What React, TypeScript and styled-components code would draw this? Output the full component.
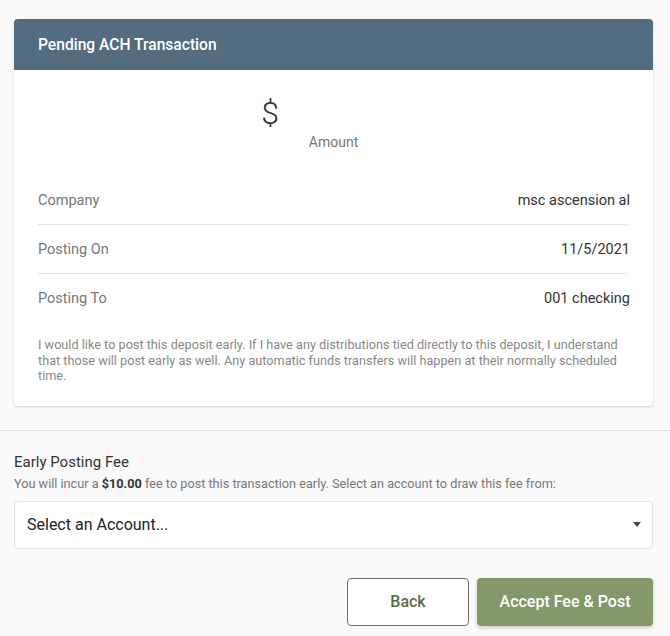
import React from "react";
import styled, { createGlobalStyle } from "styled-components";

const Global = createGlobalStyle`
  html, body { margin: 0; padding: 0; background: #fafafa; }
  body { font-family: Roboto, "Liberation Sans", Arial, sans-serif; color: #333; }
  * { box-sizing: border-box; }
`;

const Page = styled.div`
  width: 670px;
  min-height: 636px;
  background: #fafafa;
  padding-top: 19px;
`;

const CardWrap = styled.div`
  padding: 0 17px 24px 14px;
`;

const Card = styled.div`
  background: #fff;
  border-radius: 4px;
  overflow: hidden;
  box-shadow: 0 1px 3px rgba(0, 0, 0, 0.12), 0 1px 2px rgba(0, 0, 0, 0.06);
`;

const Header = styled.div`
  height: 51px;
  background: #536c80;
  display: flex;
  align-items: center;
  padding: 0 24px;
  color: #fff;
  font-size: 15.6px;
  font-weight: 500;
`;

const Body = styled.div`
  padding: 22px 24px 22px 24px;
`;

const AmountBlock = styled.div`
  display: flex;
  flex-direction: column;
  align-items: center;
  margin-bottom: 26px;
`;

const AmountRow = styled.div`
  display: flex;
  align-items: center;
  gap: 6px;
  height: 42px;
`;

const Dollar = styled.span`
  font-size: 32px;
  font-weight: 300;
  color: #333;
  line-height: 1;
`;

const AmountInput = styled.input`
  width: 121px;
  height: 38px;
  border: none;
  outline: none;
  background: transparent;
  font-family: inherit;
  font-size: 30px;
`;

const AmountLabel = styled.div`
  font-size: 14px;
  color: #777;
`;

const Row = styled.div<{ $last?: boolean }>`
  display: flex;
  justify-content: space-between;
  align-items: center;
  height: 49px;
  font-size: 14.5px;
  border-bottom: ${(p) => (p.$last ? "none" : "1px solid #e4e4e4")};
`;

const Label = styled.span`
  color: #777;
`;

const Value = styled.span`
  color: #333;
  margin-right: -1px;
`;

const Disclaimer = styled.p`
  margin: 14px 0 0 0;
  font-size: 12.7px;
  line-height: 15.5px;
  color: #888;
`;

const Divider = styled.hr`
  margin: 0;
  border: none;
  border-top: 1px solid #e2e2e2;
`;

const FeeSection = styled.div`
  padding: 22px 17px 0 14px;
`;

const FeeTitle = styled.div`
  font-size: 15px;
  color: #333;
`;

const FeeText = styled.div`
  font-size: 12.7px;
  color: #777;
  margin-top: 5px;
  strong {
    color: #333;
    font-weight: 700;
  }
`;

const Select = styled.div`
  margin-top: 10px;
  height: 48px;
  border: 1px solid #e3e3e3;
  border-radius: 4px;
  background: #fff;
  display: flex;
  align-items: center;
  justify-content: space-between;
  padding: 0 11px 0 12px;
  font-size: 16px;
  color: #222;
`;

const Caret = styled.span`
  width: 0;
  height: 0;
  border-left: 4px solid transparent;
  border-right: 4px solid transparent;
  border-top: 5px solid #444;
`;

const Actions = styled.div`
  display: flex;
  justify-content: flex-end;
  gap: 8px;
  margin-top: 29px;
`;

const Button = styled.button<{ $primary?: boolean }>`
  height: 48px;
  border-radius: 4px;
  font-family: inherit;
  font-size: 16px;
  font-weight: 500;
  cursor: pointer;
  width: ${(p) => (p.$primary ? "176px" : "122px")};
  background: ${(p) => (p.$primary ? "#83996a" : "#fff")};
  color: ${(p) => (p.$primary ? "#fff" : "#5b6b45")};
  border: ${(p) => (p.$primary ? "none" : "1px solid #6e6e60")};
  box-shadow: ${(p) =>
    p.$primary ? "0 2px 4px rgba(0,0,0,0.18)" : "none"};
`;

export default function App() {
  return (
    <Page>
      <Global />
      <CardWrap>
        <Card>
          <Header>Pending ACH Transaction</Header>
          <Body>
            <AmountBlock>
              <AmountRow>
                <Dollar>$</Dollar>
                <AmountInput readOnly value="" />
              </AmountRow>
              <AmountLabel>Amount</AmountLabel>
            </AmountBlock>
            <Row>
              <Label>Company</Label>
              <Value>msc ascension al</Value>
            </Row>
            <Row>
              <Label>Posting On</Label>
              <Value>11/5/2021</Value>
            </Row>
            <Row $last>
              <Label>Posting To</Label>
              <Value>001 checking</Value>
            </Row>
            <Disclaimer>
              I would like to post this deposit early. If I have any
              distributions tied directly to this deposit, I understand that
              those will post early as well. Any automatic funds transfers will
              happen at their normally scheduled time.
            </Disclaimer>
          </Body>
        </Card>
      </CardWrap>
      <Divider />
      <FeeSection>
        <FeeTitle>Early Posting Fee</FeeTitle>
        <FeeText>
          You will incur a <strong>$10.00</strong> fee to post this transaction
          early. Select an account to draw this fee from:
        </FeeText>
        <Select>
          <span>Select an Account...</span>
          <Caret />
        </Select>
        <Actions>
          <Button>Back</Button>
          <Button $primary>Accept Fee &amp; Post</Button>
        </Actions>
      </FeeSection>
    </Page>
  );
}
